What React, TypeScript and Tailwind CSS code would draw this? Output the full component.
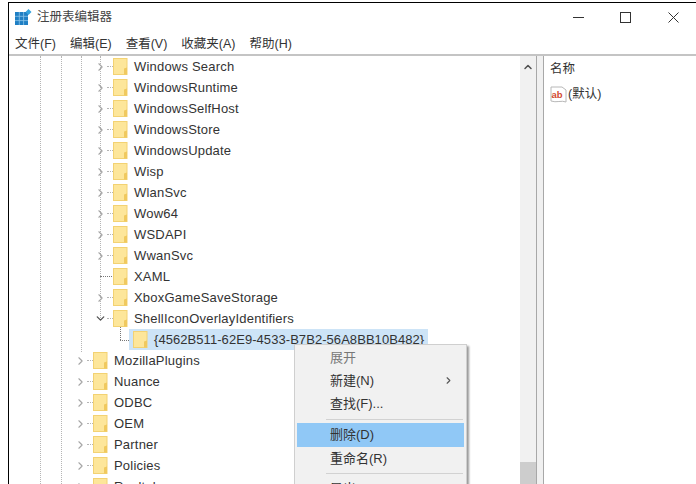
import { ChevronDown, ChevronRight, ChevronUp } from "lucide-react";

const SANS = "font-['Liberation_Sans','Noto_Sans_CJK_SC',sans-serif]";

type Row = { label: string; level: number; state?: "closed" | "open" | "leaf"; selected?: boolean };

const rows: Row[] = [
  { label: "Windows Search", level: 1 },
  { label: "WindowsRuntime", level: 1 },
  { label: "WindowsSelfHost", level: 1 },
  { label: "WindowsStore", level: 1 },
  { label: "WindowsUpdate", level: 1 },
  { label: "Wisp", level: 1 },
  { label: "WlanSvc", level: 1 },
  { label: "Wow64", level: 1 },
  { label: "WSDAPI", level: 1 },
  { label: "WwanSvc", level: 1 },
  { label: "XAML", level: 1, state: "leaf" },
  { label: "XboxGameSaveStorage", level: 1 },
  { label: "ShellIconOverlayIdentifiers", level: 1, state: "open" },
  { label: "{4562B511-62E9-4533-B7B2-56A8BB10B482}", level: 2, state: "leaf", selected: true },
  { label: "MozillaPlugins", level: 0 },
  { label: "Nuance", level: 0 },
  { label: "ODBC", level: 0 },
  { label: "OEM", level: 0 },
  { label: "Partner", level: 0 },
  { label: "Policies", level: 0 },
  { label: "Realtek", level: 0 },
];

const menus = ["文件(F)", "编辑(E)", "查看(V)", "收藏夹(A)", "帮助(H)"];

function RegIcon() {
  return (
    <svg width="17" height="17" viewBox="0 0 17 17" className="shrink-0">
      <rect x="0" y="3" width="13" height="13" fill="#1f7fc4" />
      <path d="M4.3 3v13M8.6 3v13M0 7.3h13M0 11.6h13" stroke="#8cc4e8" strokeWidth="0.8" />
      <path d="M13.5 0l3 3-3 3-3-3z" fill="#35a2dc" />
    </svg>
  );
}

function Folder() {
  return (
    <svg width="15" height="17" viewBox="0 0 15 17" className="shrink-0">
      <rect x="0.5" y="0.5" width="13.5" height="16" fill="#fde69a" stroke="#f3d272" />
      <path d="M11 16.5v-6l3 -1v7z" fill="#f0c95f" />
    </svg>
  );
}

function AbIcon() {
  return (
    <svg width="17" height="17" viewBox="0 0 17 17" className="shrink-0">
      <path d="M1 1h11l4 3v12c-4-2-10 1-15-1z" fill="#fff" stroke="#b8b8b8" />
      <text x="1.5" y="11.5" fontSize="9.5" fontWeight="700" fill="#d2492f" fontFamily="Liberation Sans">ab</text>
    </svg>
  );
}

function TreeRow({ row }: { row: Row }) {
  const state = row.state ?? "closed";
  const pad = row.level === 0 ? "pl-[65px]" : row.level === 1 ? "pl-[85px]" : "pl-[105px]";
  if (row.selected) {
    return (
      <div className={`flex h-[21px] items-center ${pad}`}>
        <span className="w-[15px] shrink-0" />
        <div className="flex h-[21px] items-center bg-[#cde4f7] pl-[4px] pr-[4px]">
          <Folder />
          <span className="ml-[1px] whitespace-nowrap pl-[5px] text-[13px] tracking-[0.06px] text-[#333333]">
            {row.label}
          </span>
        </div>
      </div>
    );
  }
  return (
    <div className={`flex h-[21px] items-center ${pad}`}>
      <span className="flex w-[13px] shrink-0 justify-center">
        {state === "closed" && <ChevronRight size={16} strokeWidth={2} className="text-[#a6a6a6]" />}
        {state === "open" && <ChevronDown size={15} strokeWidth={2.4} className="text-[#505050]" />}
      </span>
      <span className={`h-px w-[6px] shrink-0 ${state === "leaf" ? "" : "border-t border-dotted border-[#b5b5b5]"}`} />
      <Folder />
      <span className="ml-[1px] whitespace-nowrap pl-[5px] text-[13px] tracking-[0.2px] text-[#333333]">
        {row.label}
      </span>
    </div>
  );
}

function ContextMenu() {
  return (
    <div className="absolute left-[294px] top-[344px] h-[150px] w-[173px] border border-[#cfcfcf] bg-[#f1f1f1] pt-[1px] text-[13px] text-[#333333] shadow-[2px_2px_2px_rgba(0,0,0,0.4)]">
      <div className="flex h-[23px] items-center pl-[35px] text-[#777777]">展开</div>
      <div className="flex h-[23px] items-center justify-between pl-[35px] pr-[12px]">
        <span>新建(N)</span>
        <ChevronRight size={11} strokeWidth={2.4} className="text-[#555555]" />
      </div>
      <div className="flex h-[23px] items-center pl-[35px]">查找(F)...</div>
      <div className="mx-[31px] mb-[3px] mr-[3px] mt-[4px] border-t border-[#d2d2d2]" />
      <div className="mx-[2px] flex h-[24px] items-center bg-[#90c8f6] pl-[33px]">删除(D)</div>
      <div className="flex h-[23px] items-center pl-[35px]">重命名(R)</div>
      <div className="mx-[31px] my-[3px] mr-[3px] border-t border-[#d2d2d2]" />
      <div className="flex h-[23px] items-center pl-[35px]">导出(E)</div>
    </div>
  );
}

export default function App() {
  return (
    <div className={`relative h-[484px] w-[696px] overflow-hidden bg-white pl-[8px] pt-[2px] ${SANS}`}>
      <div className="flex h-[482px] flex-col border-l border-t border-black">
        <div className="flex h-[29px] shrink-0 items-center pl-[6px]">
          <RegIcon />
          <span className="ml-[5px] text-[12.5px] text-[#444444]">注册表编辑器</span>
          <div className="ml-auto flex items-center pr-[17px]">
            <span className="h-px w-[11px] bg-[#333333]" />
            <span className="ml-[36px] h-[11px] w-[11px] border border-[#333333]" />
            <svg width="11" height="11" viewBox="0 0 11 11" className="ml-[37px]">
              <path d="M0.5 0.5l10 10M10.5 0.5l-10 10" stroke="#333333" strokeWidth="1" />
            </svg>
          </div>
        </div>
        <div className="mt-[2px] flex h-[20px] shrink-0 items-center gap-[14px] pl-[6px] text-[12.5px] text-[#333333]">
          {menus.map((m) => (
            <span key={m}>{m}</span>
          ))}
        </div>
        <div className="flex min-h-0 flex-1 border-t-2 border-[#c4c4c4]">
          <div className="relative w-[528px] shrink-0 overflow-hidden border-r border-[#a8a8a8]">
            <div className="absolute left-[31px] top-0 h-full border-l border-dotted border-[#b5b5b5]" />
            <div className="absolute left-[52px] top-0 h-full border-l border-dotted border-[#b5b5b5]" />
            <div className="absolute left-[72px] top-0 h-[296px] border-l border-dotted border-[#b5b5b5]" />
            <div className="absolute left-[91px] top-0 h-[262px] border-l border-dotted border-[#b5b5b5]" />
            <div className="absolute left-[91px] top-[220px] w-[12px] border-t border-dotted border-[#777777]" />
            <div className="absolute left-[111px] top-[268px] h-[16px] border-l border-dotted border-[#777777]" />
            <div className="absolute left-[111px] top-[284px] w-[9px] border-t border-dotted border-[#777777]" />
            <div className="relative">
              {rows.map((r) => (
                <TreeRow key={r.label} row={r} />
              ))}
            </div>
            <div className="absolute bottom-0 right-0 top-0 w-[16px] bg-[#f1f1f1]">
              <div className="flex h-[16px] items-center justify-center pt-[5px]">
                <ChevronUp size={12} strokeWidth={3} className="text-[#505050]" />
              </div>
              <div className="absolute bottom-0 left-0 h-[22px] w-full bg-[#cdcdcd]" />
            </div>
          </div>
          <div className="w-[6px] shrink-0 bg-[#f0f0f0]" />
          <div className="min-w-0 flex-1 border-l border-[#a8a8a8] pl-[6px] text-[12.5px] text-[#333333]">
            <div className="flex h-[24px] items-center pt-[3px]">名称</div>
            <div className="mt-[3px] flex h-[23px] items-center gap-[1px]">
              <AbIcon />
              <span>(默认)</span>
            </div>
          </div>
        </div>
      </div>
      <ContextMenu />
    </div>
  );
}
